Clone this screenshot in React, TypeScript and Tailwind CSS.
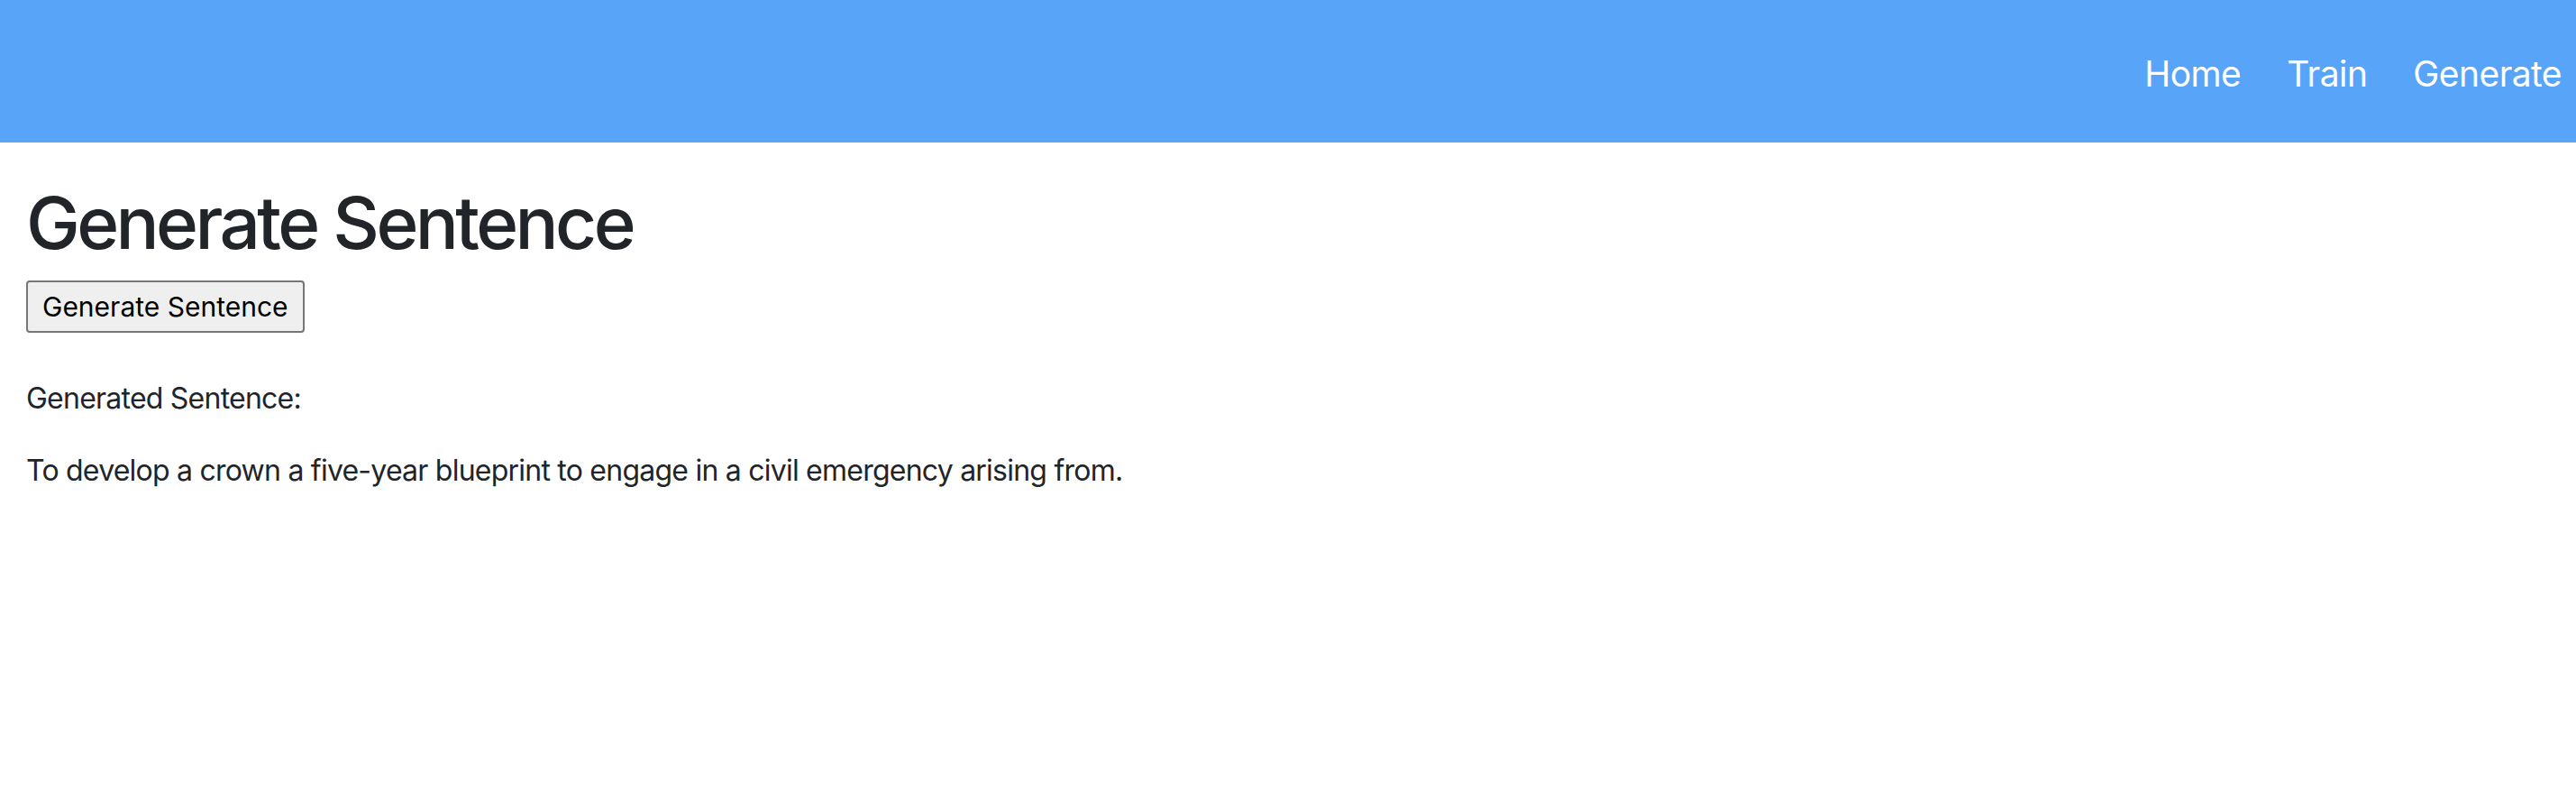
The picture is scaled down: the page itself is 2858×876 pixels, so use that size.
import React, { useState } from 'react';

const sentences = [
  'To develop a crown a five-year blueprint to engage in a civil emergency arising from.',
];

export default function App() {
  const [sentence, setSentence] = useState(sentences[0]);

  return (
    <div className="min-h-screen bg-white font-['Inter','Liberation_Sans',sans-serif] text-[#212529]">
      {/* Top Nav */}
      <header className="h-[158px] bg-[#57a4f8] flex items-center justify-end pr-4">
        <nav className="flex items-center gap-[51px] text-[39px] tracking-[-0.015em] text-white pt-[6px]">
          <a href="#">Home</a>
          <a href="#">Train</a>
          <a href="#">Generate</a>
        </nav>
      </header>

      {/* Page Content */}
      <main className="px-[29px] pt-[41px]">
        <h1 className="text-[80px] leading-[96px] font-medium tracking-[-0.045em] mb-4">Generate Sentence</h1>
        <button
          className="h-[58px] px-[16px] text-[30px] text-black bg-[#efefef] border-2 border-[#767676] rounded-[4px]"
          onClick={() => setSentence(sentences[0])}
        >
          Generate Sentence
        </button>
        <div className="mt-[49px] text-[32px] leading-[48px] tracking-[-0.024em]">
          <p className="mb-8">Generated Sentence:</p>
          <p>{sentence}</p>
        </div>
      </main>
    </div>
  );
}
